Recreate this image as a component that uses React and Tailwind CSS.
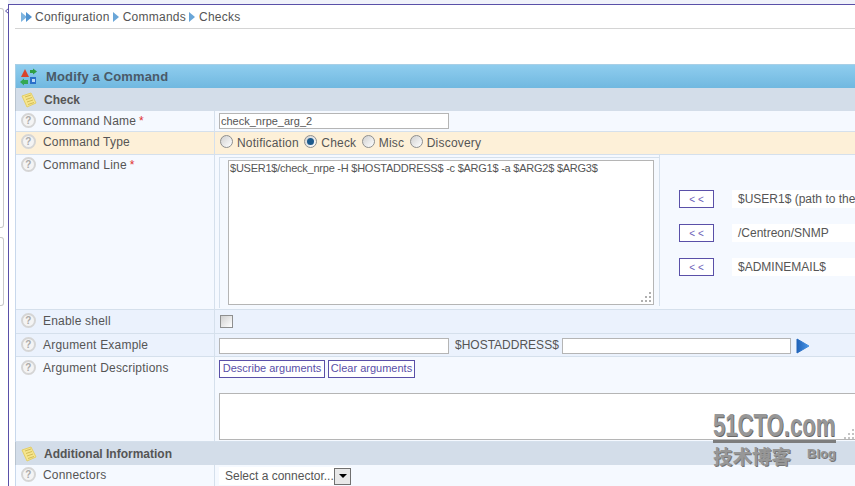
import React from "react";

const font = { fontFamily: '"Liberation Sans", Arial, sans-serif' };

function Help() {
  return (
    <span className="mt-[2px] ml-[5px] flex h-[15px] w-[15px] shrink-0 items-center justify-center rounded-full border-2 border-[#d5d5d5] bg-[#f4f4f4] text-[10px] leading-none font-bold text-[#aaaaaa]">
      ?
    </span>
  );
}

function Note() {
  return (
    <svg width="16" height="16" viewBox="0 0 16 16" className="ml-[5px] shrink-0">
      <path d="M1 4 L10 1 L15 11 L6 15 Z" fill="#f6e58d" stroke="#e3cf6a" strokeWidth="1" />
      <path d="M4 5 L10 3 M5 7.5 L11 5.5 M6 10 L12 8 M7 12.5 L13 10.5" stroke="#c9b24a" strokeWidth="0.8" />
    </svg>
  );
}

function CubeIcon() {
  return (
    <svg width="18" height="18" viewBox="0 0 18 18" className="ml-[4px] shrink-0">
      <path d="M5 1 L9 9 H1 Z" fill="#d9442b" />
      <path d="M10 2 H13 V0.5 L17 3.5 L13 6.5 V5 H10 Z" fill="#2f9e44" />
      <path d="M8 16 H4 V17.5 L0 14 L4 10.5 V12 H8 Z" fill="#34a853" />
      <path d="M10 9 H16 V16 H10 Z" fill="#2a6fc9" />
      <rect x="12" y="11" width="3" height="3" fill="#bcd8f5" />
    </svg>
  );
}

function Section({ title }) {
  return (
    <div className="flex h-[23px] items-center border-l border-[#b8c4d0] bg-[#d3dde9]">
      <Note />
      <span className="ml-[7px] text-[12px] font-bold text-[#555555]">{title}</span>
    </div>
  );
}

function Row({ label, star, rowClass, cellClass, children, height, labelClass }) {
  return (
    <div className={`flex border-b border-[#d5e0ec] ${rowClass} ${height}`}>
      <div className={`flex w-[199px] shrink-0 items-start gap-[7px] border-r border-[#d5e0ec] text-[12px] tracking-[0.2px] text-[#555555] ${labelClass}`}>
        <Help />
        <span className="mt-[1px] whitespace-nowrap">
          {label}
          {star && <span className="ml-[3px] text-[#e03030]">*</span>}
        </span>
      </div>
      <div className={`min-w-0 flex-1 ${cellClass}`}>{children}</div>
    </div>
  );
}

function Radio({ checked, label }) {
  return (
    <span className="mr-[5.5px] flex items-center text-[12px] tracking-[0.2px] text-[#555555]">
      <span className="mr-[4px] mb-[4px] flex h-[13px] w-[13px] items-center justify-center rounded-full border border-[#8e8f8f] bg-[linear-gradient(135deg,#d0d0d0,#ffffff)]">
        {checked && <span className="h-[7px] w-[7px] rounded-full bg-[#1d5a8c]" />}
      </span>
      {label}
    </span>
  );
}

function InsertRow({ text }) {
  return (
    <div className="flex h-[18px] items-center">
      <button className="flex h-[18px] w-[35px] items-center justify-center border border-[#5a50a8] bg-white text-[10px] text-[#6a60b8]">
        &lt; &lt;
      </button>
      <span className="ml-[18px] flex h-[18px] w-[140px] shrink-0 items-center bg-white pl-[6px] text-[12px] whitespace-nowrap text-[#555555]">
        {text}
      </span>
    </div>
  );
}

function LinkBtn({ children, width }) {
  return (
    <button className={`h-[18px] border border-[#5a50a8] bg-white pb-[2px] text-[11px] leading-none whitespace-nowrap text-[#5a50a8] ${width}`}>
      {children}
    </button>
  );
}

function Crumb() {
  return (
    <svg width="7" height="10" viewBox="0 0 7 10" className="mx-[3px]">
      <path d="M0 0 L6 5 L0 10 Z" fill="#6aa6d8" />
    </svg>
  );
}

export default function App() {
  return (
    <div style={font} className="relative h-[486px] w-[855px] overflow-hidden bg-white">
      <div className="ml-[8px] h-[5px] border-b border-[#5a50a8] bg-[#f0f2fa]" />
      <div className="absolute top-[8px] left-0 h-[220px] w-[4px] rounded-r-[3px] border border-l-0 border-[#c8c8c8]" />
      <div className="absolute top-[237px] left-0 h-[69px] w-[4px] rounded-r-[3px] border border-l-0 border-[#c8c8c8]" />
      <svg width="4" height="6" viewBox="0 0 4 6" className="absolute top-[8px] left-[5px]">
        <path d="M3.5 0.5 L0.5 3 L3.5 5.5" fill="none" stroke="#5a50a8" strokeWidth="1" />
      </svg>
      <div className="ml-[8px] h-[481px] border-l border-[#5a50a8] pl-[6px]">
        <div className="flex h-[24px] items-center border-b border-[#d4d4d4] pt-[1px] text-[12px] tracking-[0.25px] text-[#555555]">
          <svg width="12" height="10" viewBox="0 0 12 10" className="mr-[2px] ml-[6px]">
            <path d="M0 0 L6 5 L0 10 Z" fill="#7db4e0" />
            <path d="M5 0 L11 5 L5 10 Z" fill="#4f93d1" />
          </svg>
          Configuration
          <Crumb />
          Commands
          <Crumb />
          Checks
        </div>

        <div className="mt-[35px] w-[900px]">
          <div className="flex h-[24px] items-center border-t border-l border-[#a8cfe6] border-b-[#9aa7b3] bg-[linear-gradient(#8fcdee,#70b8e0)]">
            <CubeIcon />
            <span className="ml-[8px] text-[13px] font-bold tracking-[0.15px] text-[#4a5a68]">Modify a Command</span>
          </div>
          <Section title="Check" />
          <div className="border-l border-[#c8d8ec]">
            <Row label="Command Name" star rowClass="bg-[#f5f9ff]" height="h-[21px]" cellClass="pl-[4px] pt-[2px]">
              <input readOnly value="check_nrpe_arg_2" className="block h-[16px] w-[230px] border border-[#b5b5b5] bg-white px-[1px] text-[11px] text-[#555555] outline-none" />
            </Row>
            <Row label="Command Type" rowClass="bg-[#fdf0d8]" height="h-[23px]" cellClass="pl-[5px] flex items-center">
              <Radio label="Notification" />
              <Radio checked label="Check" />
              <Radio label="Misc" />
              <Radio label="Discovery" />
            </Row>
            <Row label="Command Line" star rowClass="bg-[#f5f9ff]" height="h-[155px]" cellClass="flex">
              <div className="mt-[2px] ml-[4px] h-[151px] w-[440px] shrink-0 border-t border-l border-[#d5e0ec] pt-[2px] pl-[8px]">
                <div className="relative h-[145px] w-[426px] border border-[#b5b5b5] bg-white pl-[1px] text-[11px] leading-[14px] tracking-[-0.24px] whitespace-nowrap text-[#555555]">
                  $USER1$/check_nrpe -H $HOSTADDRESS$ -c $ARG1$ -a $ARG2$ $ARG3$
                  <svg width="12" height="12" viewBox="0 0 12 12" className="absolute right-[1px] bottom-[1px]">
                    <g fill="#b0b0b0">
                      <rect x="9" y="1" width="2" height="2" />
                      <rect x="5" y="5" width="2" height="2" />
                      <rect x="9" y="5" width="2" height="2" />
                      <rect x="1" y="9" width="2" height="2" />
                      <rect x="5" y="9" width="2" height="2" />
                      <rect x="9" y="9" width="2" height="2" />
                    </g>
                  </svg>
                </div>
              </div>
              <div className="mb-[3px] flex flex-1 flex-col gap-[16px] border-l border-[#d5e0ec] pt-[35px] pl-[19px]">
                <InsertRow text="$USER1$ (path to the" />
                <InsertRow text="/Centreon/SNMP" />
                <InsertRow text="$ADMINEMAIL$" />
              </div>
            </Row>
            <Row label="Enable shell" labelClass="pt-[1px]" rowClass="bg-[#ebf2fd]" height="h-[24px]" cellClass="pl-[5px] pt-[5px]">
              <span className="block h-[13px] w-[13px] border border-[#8e8f8f] bg-[linear-gradient(135deg,#d0d0d0,#ffffff)]" />
            </Row>
            <Row label="Argument Example" labelClass="pt-[1px]" rowClass="bg-[#ebf2fd]" height="h-[23px]" cellClass="pl-[4px] pt-[4px] flex items-start">
              <input readOnly className="block h-[16px] w-[230px] border border-[#b5b5b5] bg-white" />
              <span className="ml-[6px] text-[12px] leading-[15px] text-[#555555]">$HOSTADDRESS$</span>
              <input readOnly className="ml-[3px] block h-[16px] w-[229px] border border-[#b5b5b5] bg-white" />
              <svg width="14" height="16" viewBox="0 0 14 16" className="ml-[5px]">
                <defs>
                  <linearGradient id="play" x1="0" y1="0" x2="1" y2="0">
                    <stop offset="0" stopColor="#1f62b8" />
                    <stop offset="1" stopColor="#4a96e6" />
                  </linearGradient>
                </defs>
                <path d="M1 1 L13 8 L1 15 Z" fill="url(#play)" stroke="url(#play)" strokeWidth="1" strokeLinejoin="round" />
              </svg>
            </Row>
            <Row label="Argument Descriptions" labelClass="pt-[1px]" rowClass="bg-[#f5f9ff]" height="h-[85px]" cellClass="pl-[4px] pt-[3px]">
              <div className="flex gap-[3px]">
                <LinkBtn width="w-[106px]">Describe arguments</LinkBtn>
                <LinkBtn width="w-[87px]">Clear arguments</LinkBtn>
              </div>
              <div className="mt-[15px] h-[47px] w-[700px] border border-[#b5b5b5] bg-white" />
            </Row>
          </div>
          <Section title="Additional Information" />
          <div className="border-l border-[#c8d8ec]">
            <Row label="Connectors" rowClass="bg-[#f5f9ff]" height="h-[24px]" cellClass="pl-[4px] pt-[2px]">
              <div className="flex h-[18px] w-[132px] items-center bg-white pl-[6px] text-[12px] whitespace-nowrap text-[#555555]">
                Select a connector...
                <span className="ml-auto flex h-[17px] w-[17px] shrink-0 items-center justify-center border border-[#707070] bg-[#e8e8e8]">
                  <span className="h-0 w-0 border-x-[4px] border-t-[4px] border-x-transparent border-t-black" />
                </span>
              </div>
            </Row>
          </div>
        </div>
      </div>

      <div className="absolute top-[411px] left-[713px] w-[123px] text-[#979797]">
        <div className="origin-left scale-x-[0.69] text-[32px] leading-[29px] font-bold whitespace-nowrap [text-shadow:1px_1px_0_#666666]">
          51CTO.com
        </div>
        <div className="h-[3px] w-[123px] bg-[#7d7d7d]" />
        <div className="flex items-start">
          <span
            className="text-[19.5px] leading-[26px] font-bold whitespace-nowrap [text-shadow:1px_1px_0_#777777]"
            style={{ fontFamily: '"Noto Sans CJK SC", sans-serif' }}
          >
            技术博客
          </span>
          <span className="mt-[4px] ml-auto text-[13px] leading-[14px] font-bold [text-shadow:1px_1px_0_#777777]">Blog</span>
        </div>
      </div>
      <svg width="12" height="12" viewBox="0 0 12 12" className="absolute top-[428px] left-[843px]">
        <g fill="#c4c4c4">
          <rect x="9" y="1" width="2" height="2" />
          <rect x="5" y="5" width="2" height="2" />
          <rect x="9" y="5" width="2" height="2" />
          <rect x="1" y="9" width="2" height="2" />
          <rect x="5" y="9" width="2" height="2" />
          <rect x="9" y="9" width="2" height="2" />
        </g>
      </svg>
    </div>
  );
}
